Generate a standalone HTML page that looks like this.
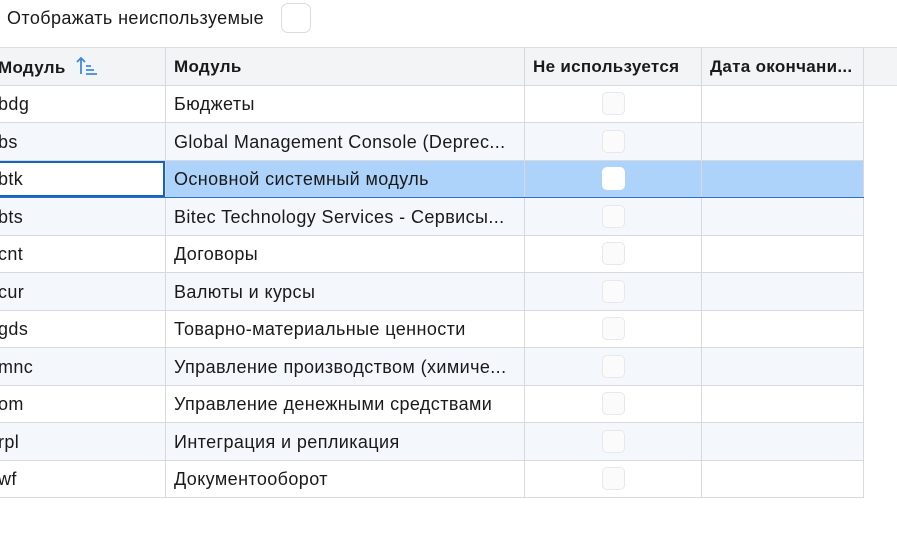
<!DOCTYPE html><html><head><style>
body{margin:0;width:897px;height:548px;background:#fff;font-family:"Liberation Sans",sans-serif;color:#1a1a1a;overflow:hidden;position:relative}
.top{position:absolute;left:7px;top:8px;font-size:18px;letter-spacing:0.4px;white-space:nowrap}
.cb{position:absolute;left:281px;top:3px;width:30px;height:30px;border:1px solid #d9dce0;border-radius:7px;box-sizing:border-box}
table{position:absolute;left:-11px;top:47px;width:913px;border-collapse:collapse;table-layout:fixed;font-size:18px;letter-spacing:0.4px}
td,th{height:37.5px;box-sizing:border-box;border:1px solid #d6d9dd;padding:2px 8px 0;white-space:nowrap;overflow:hidden;text-overflow:ellipsis;text-align:left}
th{background:#f3f4f6;font-weight:bold;font-size:17px;letter-spacing:0.3px;border-top-color:#dcdfe3}
th.e{border-right:none;border-bottom-color:#dcdfe3}
tr:nth-child(odd) td{background:#f4f7fc}
tr.sel td{background:#aed3fb;border-top:1px solid #2a6fc9;border-bottom:1px solid #2a6fc9}
tr.sel td.f{background:#fff;box-shadow:inset 0 0 0 2px #1565c0}
.c{text-align:center;padding-top:0}
.k{display:inline-block;width:23px;height:23px;border:1px solid #e6e8eb;border-radius:5px;background:#fbfbfc;vertical-align:middle;box-sizing:border-box}
tr.sel .k{background:#fff;border-color:#fff}
</style></head><body>
<div class="top">Отображать неиспользуемые</div><span class="cb"></span>
<table>
<colgroup><col style="width:176px"><col style="width:359px"><col style="width:177px"><col style="width:162px"><col style="width:40px"></colgroup>
<tr><th>Модуль <svg width="22" height="20" viewBox="0 0 22 20" style="vertical-align:-3px;margin-left:5px" fill="none" stroke="#3b8be0" stroke-width="1.8"><path d="M5 18V2M1 6l4-4 4 4M10 10h5M10 14h8M10 18h11"/></svg></th><th>Модуль</th><th>Не используется</th><th>Дата окончани...</th><th class="e"></th></tr>
<tr><td>bdg</td><td>Бюджеты</td><td class="c"><span class="k"></span></td><td></td></tr>
<tr><td>bs</td><td>Global Management Console (Deprec...</td><td class="c"><span class="k"></span></td><td></td></tr>
<tr class="sel"><td class="f">btk</td><td>Основной системный модуль</td><td class="c"><span class="k"></span></td><td></td></tr>
<tr><td>bts</td><td>Bitec Technology Services - Сервисы...</td><td class="c"><span class="k"></span></td><td></td></tr>
<tr><td>cnt</td><td>Договоры</td><td class="c"><span class="k"></span></td><td></td></tr>
<tr><td>cur</td><td>Валюты и курсы</td><td class="c"><span class="k"></span></td><td></td></tr>
<tr><td>gds</td><td>Товарно-материальные ценности</td><td class="c"><span class="k"></span></td><td></td></tr>
<tr><td>mnc</td><td>Управление производством (химиче...</td><td class="c"><span class="k"></span></td><td></td></tr>
<tr><td>om</td><td>Управление денежными средствами</td><td class="c"><span class="k"></span></td><td></td></tr>
<tr><td>rpl</td><td>Интеграция и репликация</td><td class="c"><span class="k"></span></td><td></td></tr>
<tr><td>wf</td><td>Документооборот</td><td class="c"><span class="k"></span></td><td></td></tr>
</table>
</body></html>
